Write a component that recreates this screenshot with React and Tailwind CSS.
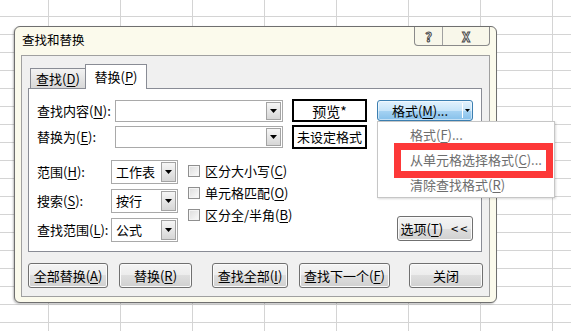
import React from "react";

const M = ({ c }) => <span className="underline underline-offset-[2px]">{c}</span>;

const Arrow = () => (
  <svg width="7" height="4" viewBox="0 0 7 4">
    <path d="M0 0h7L3.5 4z" fill="#000" />
  </svg>
);

const DropBtn = ({ h = "h-[18px]" }) => (
  <div
    className={`w-[15px] ${h} flex items-center justify-center border border-[#a3a3a3] bg-[linear-gradient(to_bottom,#f6f6f6,#d6d6d6)]`}
  >
    <Arrow />
  </div>
);

const Input = () => (
  <div className="w-[168px] h-[22px] flex items-center justify-end pr-[1px] border border-[#a9a9a9] bg-white">
    <DropBtn />
  </div>
);

const Select = ({ value }) => (
  <div className="w-[67px] h-[24px] flex items-center border border-[#a9a9a9] bg-white pl-[4px] pr-[1px]">
    <span className="flex-1 text-[13px] leading-[16px]">{value}</span>
    <DropBtn h="h-[20px]" />
  </div>
);

const Check = ({ children }) => (
  <div className="h-[22px] flex items-center">
    <div className="w-[12px] h-[12px] border border-[#8f8f8f] bg-[linear-gradient(to_bottom_right,#dcdcdc,#fbfbfb)] shadow-[inset_0_0_0_1px_#f4f4f4]" />
    <span className="ml-[5px] text-[13px] leading-[16px]">{children}</span>
  </div>
);

const btn =
  "h-[25px] flex items-center justify-center border border-[#707070] rounded-[3px] bg-[linear-gradient(to_bottom,#f4f4f4_0%,#ececec_50%,#dedede_50%,#d0d0d0_100%)] shadow-[inset_0_0_0_1px_#fbfbfb] text-[13px] leading-[16px]";

export default function App() {
  return (
    <div className="relative w-[571px] h-[331px] overflow-hidden bg-white bg-[linear-gradient(to_right,#d4d4d4_1px,transparent_1px),linear-gradient(to_bottom,#d4d4d4_1px,transparent_1px)] bg-[size:72px_18px] bg-[position:48px_16px] font-['Noto_Sans_CJK_SC',sans-serif] text-black">
      {/* dialog window */}
      <div className="absolute left-[14px] top-[26px] w-[483px] h-[277px] rounded-[6px] border border-[#6f6f6f] bg-[#fbfaec] shadow-[-1px_1px_2px_rgba(0,0,0,0.25)] flex flex-col">
        <div className="h-[28px] flex items-start">
          <span className="ml-[7px] mt-[5px] text-[12.5px] leading-[16px]">查找和替换</span>
          <div className="ml-auto mr-[6px] h-[19px] flex border border-t-0 border-[#8a8a8a] rounded-b-[4px] bg-[#f8f7ea]">
            <div className="w-[28px] flex items-center justify-center border-r border-[#a0a0a0] text-[13px] font-bold leading-none text-white [-webkit-text-stroke:1px_#4a4a4a]">
              ?
            </div>
            <div className="w-[46px] flex items-center justify-center text-[13px] font-bold leading-none text-white [-webkit-text-stroke:1px_#4a4a4a]">
              X
            </div>
          </div>
        </div>

        {/* client area */}
        <div className="mx-[6px] h-[242px] border border-[#a0a0a0] bg-[#f0f0f0] flex flex-col">
          <div className="mt-[8px] ml-[6px] w-[454px]">
            {/* tabs */}
            <div className="h-[24px] flex items-end pl-[2px]">
              <div className="w-[56px] h-[20px] flex items-center justify-center border border-b-0 border-[#898c95] bg-[linear-gradient(to_bottom,#f3f3f3,#d8d8d8)] text-[13px] leading-[16px]">
                <span>
                  查找(<M c="D" />)
                </span>
              </div>
              <div className="relative z-10 -ml-px mb-[-1px] w-[62px] h-[25px] flex items-center justify-center border border-b-0 border-[#898c95] bg-white text-[13px] leading-[16px]">
                <span>
                  替换(<M c="P" />)
                </span>
              </div>
            </div>

            {/* tab panel */}
            <div className="h-[164px] border border-[#898c95] bg-white pl-[8px] pt-[10px] flex flex-col">
              <div className="h-[23px] flex items-center">
                <span className="w-[78px] text-[13px] leading-[16px]">
                  查找内容(<M c="N" />):
                </span>
                <Input />
                <div className="ml-[9px] w-[75px] h-[23px] flex items-center justify-center border-2 border-black text-[14px] leading-[16px]">
                  预览*
                </div>
                <div className="ml-[10px] w-[96px] h-[21px] flex items-center border border-[#3c7fb1] rounded-[3px] bg-[linear-gradient(to_bottom,#e3f2fd_0%,#c6e4f9_50%,#a6d3f3_50%,#86c0ea_100%)] shadow-[inset_0_0_0_1px_rgba(255,255,255,0.5)]">
                  <span className="flex-1 text-center text-[13px] leading-[16px]">
                    格式(<M c="M" />)...
                  </span>
                  <div className="w-px h-[15px] bg-white" />
                  <div className="w-[9px] flex justify-center">
                    <svg width="5" height="3" viewBox="0 0 5 3">
                      <path d="M0 0h5L2.5 3z" fill="#000" />
                    </svg>
                  </div>
                </div>
              </div>

              <div className="mt-[3px] h-[24px] flex items-center">
                <span className="w-[78px] text-[13px] leading-[16px]">
                  替换为(<M c="E" />):
                </span>
                <Input />
                <div className="ml-[9px] w-[75px] h-[24px] flex items-center justify-center border-2 border-black text-[13px] leading-[16px]">
                  未设定格式
                </div>
              </div>

              <div className="mt-[11px] flex">
                <div className="flex flex-col gap-[5px]">
                  <div className="h-[24px] flex items-center">
                    <span className="w-[74px] text-[13px] leading-[16px]">
                      范围(<M c="H" />):
                    </span>
                    <Select value="工作表" />
                  </div>
                  <div className="h-[24px] flex items-center">
                    <span className="w-[74px] text-[13px] leading-[16px]">
                      搜索(<M c="S" />):
                    </span>
                    <Select value="按行" />
                  </div>
                  <div className="h-[24px] flex items-center">
                    <span className="w-[74px] text-[13px] leading-[16px]">
                      查找范围(<M c="L" />):
                    </span>
                    <Select value="公式" />
                  </div>
                </div>
                <div className="ml-[10px] flex flex-col">
                  <Check>
                    区分大小写(<M c="C" />)
                  </Check>
                  <Check>
                    单元格匹配(<M c="O" />)
                  </Check>
                  <Check>
                    区分全/半角(<M c="B" />)
                  </Check>
                </div>
                <div className={`${btn} self-end ml-auto mr-[8px] mb-[1px] w-[76px] h-[24px] gap-[8px]`}>
                  <span>
                    选项(<M c="T" />)
                  </span>
                  <span className="tracking-[2px]">&lt;&lt;</span>
                </div>
              </div>
            </div>
          </div>

          {/* bottom buttons */}
          <div className="mt-[11px] pl-[6px] flex">
            <div className={`${btn} w-[80px]`}>
              全部替换(<M c="A" />)
            </div>
            <div className={`${btn} ml-[11px] w-[73px]`}>
              替换(<M c="R" />)
            </div>
            <div className={`${btn} ml-[20px] w-[76px]`}>
              查找全部(<M c="I" />)
            </div>
            <div className={`${btn} ml-[11px] w-[91px]`}>
              查找下一个(<M c="F" />)
            </div>
            <div className={`${btn} ml-[19px] w-[74px]`}>关闭</div>
          </div>
        </div>
      </div>

      {/* dropdown menu of the format button */}
      <div className="absolute left-[377px] top-[121px] w-[178px] h-[77px] border border-[#c6c6c6] bg-white shadow-[1px_1px_2px_rgba(0,0,0,0.15)] pt-[1px] flex flex-col text-[13px] leading-[16px] text-[#6d6d6d]">
        <div className="h-[25px] flex items-center pl-[32px]">
          <span>
            格式(<M c="F" />)...
          </span>
        </div>
        <div className="h-[25px] flex items-center pl-[32px]">
          <span>
            从单元格选择格式(<M c="C" />)...
          </span>
        </div>
        <div className="h-[25px] flex items-center pl-[32px]">
          <span>
            清除查找格式(<M c="R" />)
          </span>
        </div>
      </div>

      {/* red highlight */}
      <div className="absolute left-[394px] top-[143px] w-[159px] h-[35px] border-[7px] border-[#fd3838]" />
    </div>
  );
}
